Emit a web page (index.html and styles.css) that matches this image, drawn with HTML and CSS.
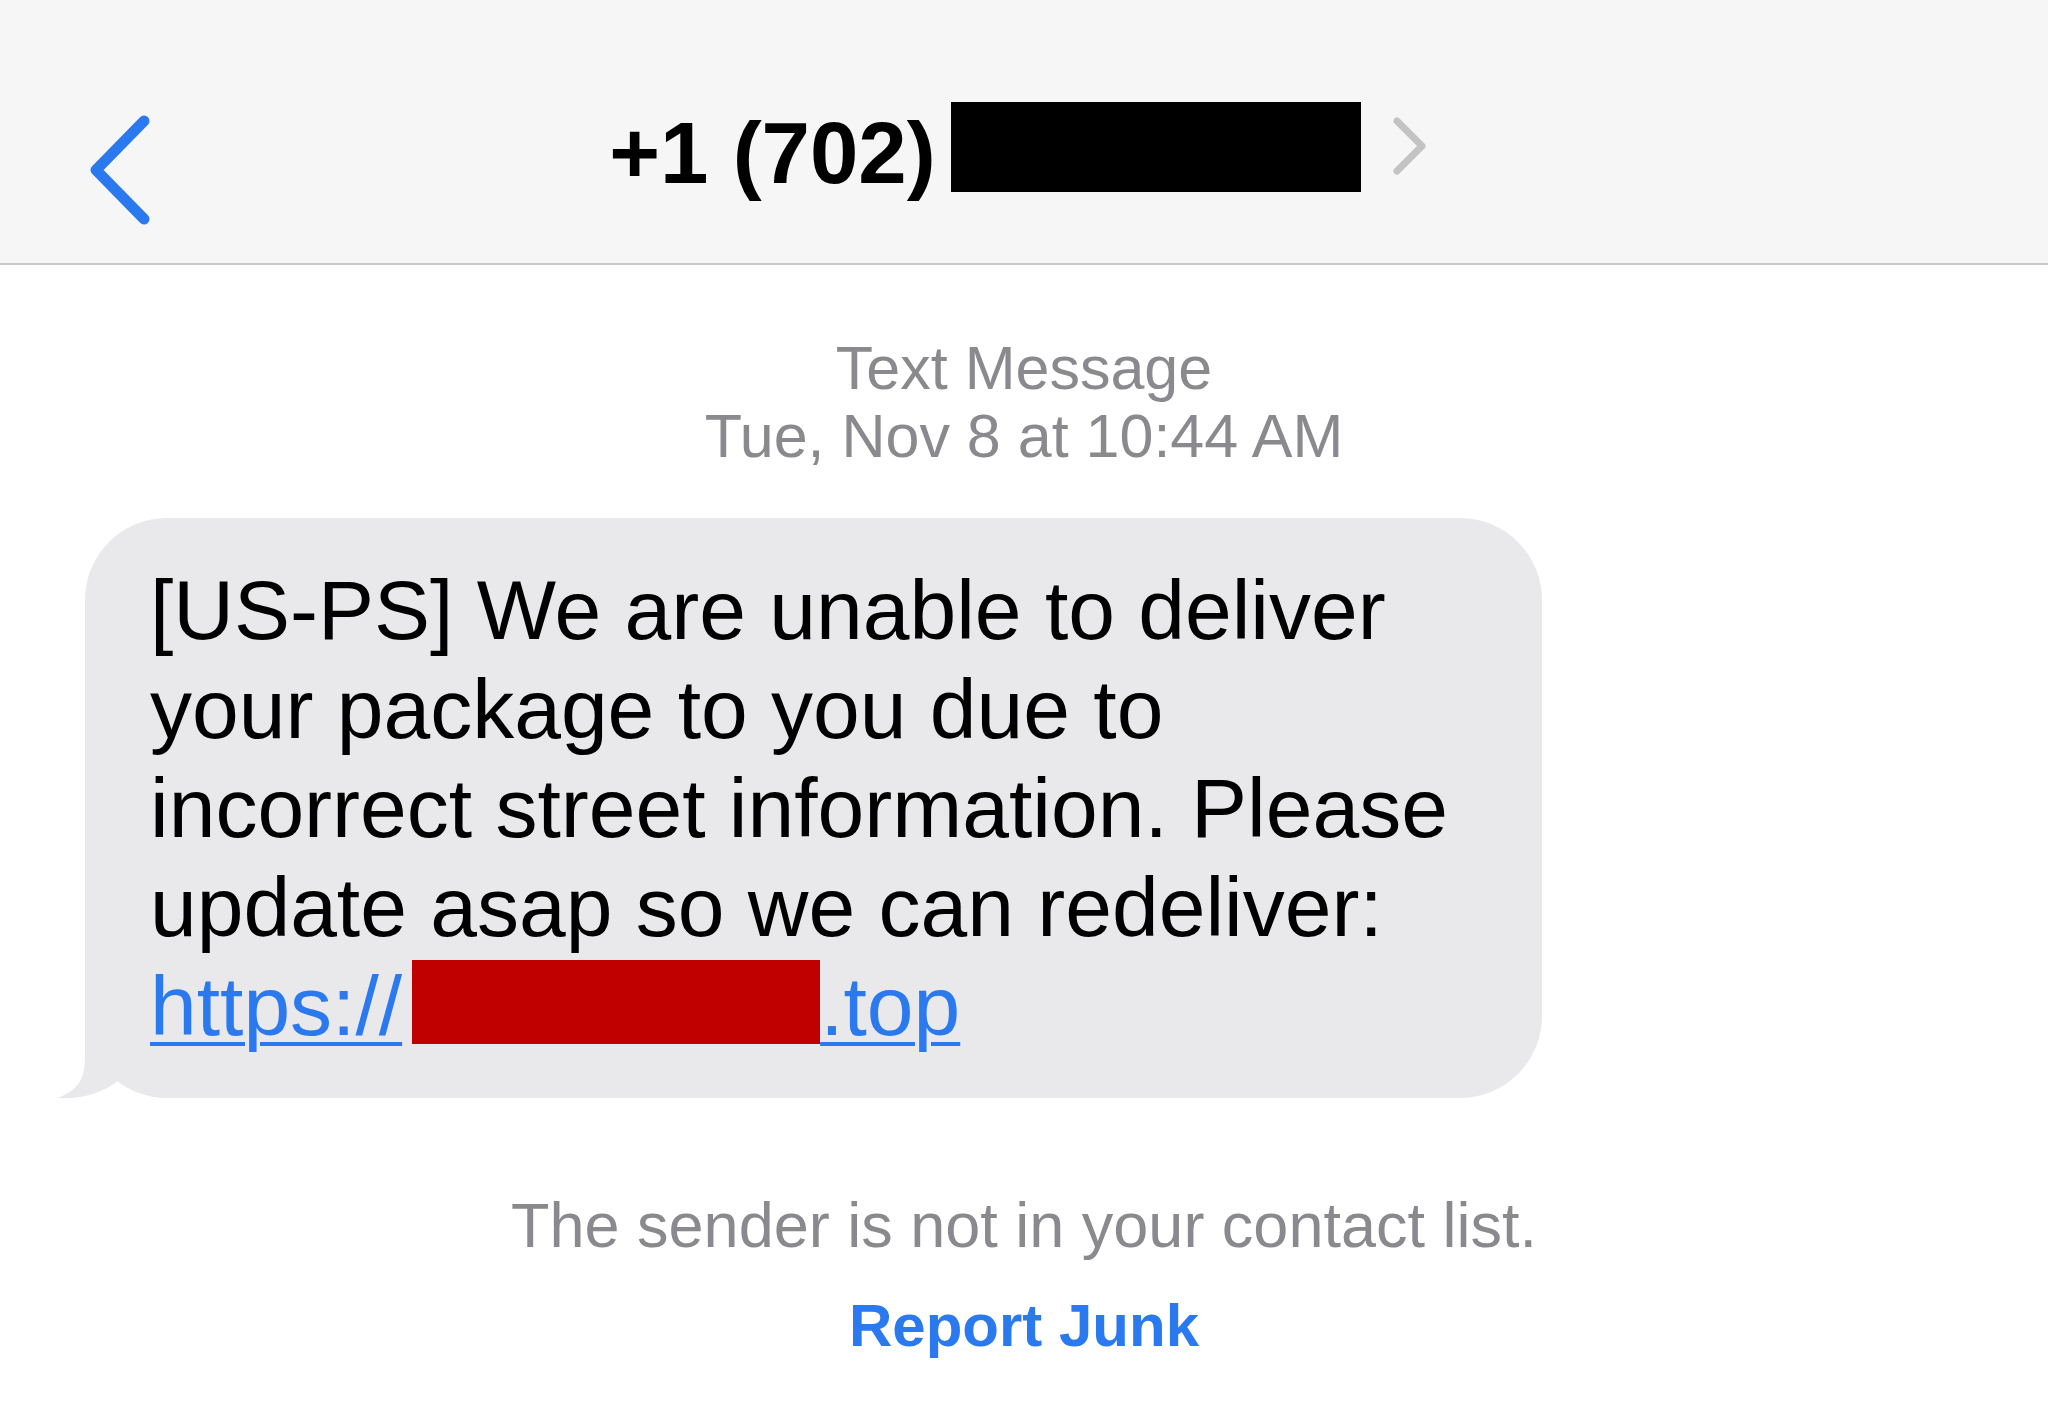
FILE: index.html
```html
<!DOCTYPE html>
<html lang="en">
<head>
    <meta charset="UTF-8">
    <meta name="viewport" content="width=device-width, initial-scale=1.0">
    <title>Text Message</title>
    <link rel="stylesheet" href="styles.css">
</head>
<body>
    <header class="nav-bar">
        <a class="back-button" href="#" aria-label="Back">
            <svg class="back-icon" viewBox="0 0 70 115" width="70" height="115">
                <path d="M60 8 L12 57 L60 106" />
            </svg>
        </a>
        <h1 class="contact-title">
            +1 (702)<span class="redact-black"></span><svg class="detail-icon" viewBox="0 0 40 62" width="40" height="62">
                <path d="M8 6 L33 31 L8 56" />
            </svg>
        </h1>
        <div class="nav-spacer"></div>
    </header>

    <main class="thread">
        <div class="timestamp">
            <div class="timestamp-kind">Text Message</div>
            <div class="timestamp-date">Tue, Nov 8 at 10:44 AM</div>
        </div>

        <div class="bubble-row">
            <div class="bubble">
                <p class="bubble-text">[US-PS] We are unable to deliver<br>your package to you due to<br>incorrect street information. Please<br>update asap so we can redeliver:<br><a class="bubble-link" href="#">https://<span class="redact-red"></span>.top</a></p>
                <svg class="bubble-tail" viewBox="0 0 100 100" width="100" height="100">
                    <path d="M30 0 L30 60 C30 82 22 93 2 100 C26 102 48 95 64 82 L78 0 Z" />
                </svg>
            </div>
        </div>

        <div class="junk-notice">
            <p class="junk-text">The sender is not in your contact list.</p>
            <a class="junk-link" href="#">Report Junk</a>
        </div>
    </main>
</body>
</html>
```

FILE: styles.css
```css
* {
    margin: 0;
    padding: 0;
    box-sizing: border-box;
}

:root {
    --ios-blue: #2b79ee;
    --ios-gray: #8a8a8e;
    --bubble-gray: #e9e9eb;
}

body {
    background-color: #fff;
    color: #000;
    font-family: "Liberation Sans", Arial, sans-serif;
    min-height: 100vh;
    overflow: hidden;
}

/* top navigation */
.nav-bar {
    display: grid;
    grid-template-columns: 1fr auto 1fr;
    align-items: start;
    height: 265px;
    background-color: #f6f6f6;
    border-bottom: 2px solid #c9c9c9;
}

.back-button {
    display: block;
    width: 70px;
    margin-top: 113px;
    margin-left: 84px;
}

.back-icon {
    display: block;
}

.back-icon path {
    fill: none;
    stroke: var(--ios-blue);
    stroke-width: 11;
    stroke-linecap: round;
    stroke-linejoin: round;
}

.contact-title {
    margin-top: 102px;
    margin-right: 10px;
    font-size: 87px;
    line-height: 88px;
    font-weight: bold;
    white-space: nowrap;
}

.redact-black {
    display: inline-block;
    width: 410px;
    height: 90px;
    margin-left: 15px;
    background: #000;
    vertical-align: -9px;
}

.detail-icon {
    margin-left: 28px;
    vertical-align: 6px;
}

.detail-icon path {
    fill: none;
    stroke: #c3c3c3;
    stroke-width: 7;
    stroke-linecap: round;
    stroke-linejoin: round;
}

/* message thread */
.thread {
    display: flex;
    flex-direction: column;
}

.timestamp {
    margin-top: 69px;
    text-align: center;
    color: var(--ios-gray);
    font-size: 61px;
    line-height: 68px;
}

.bubble-row {
    display: flex;
    margin-top: 48px;
    padding-left: 85px;
}

.bubble {
    position: relative;
    width: 1457px;
    padding: 43px 40px 42px 65px;
    background: var(--bubble-gray);
    border-radius: 82px;
}

.bubble-text {
    position: relative;
    z-index: 1;
    font-size: 84px;
    line-height: 99px;
    color: #000;
    white-space: nowrap;
}

.bubble-link {
    color: var(--ios-blue);
    text-decoration: underline;
    text-decoration-thickness: 4px;
    text-underline-offset: 7px;
}

.redact-red {
    display: inline-block;
    width: 408px;
    height: 84px;
    margin-left: 10px;
    background: #c00000;
    vertical-align: -9px;
}

.bubble-tail {
    position: absolute;
    left: -30px;
    bottom: 0;
    overflow: visible;
}

.bubble-tail path {
    fill: var(--bubble-gray);
}

/* unknown sender footer */
.junk-notice {
    display: flex;
    flex-direction: column;
    align-items: center;
    margin-top: 92px;
}

.junk-text {
    color: var(--ios-gray);
    font-size: 63px;
    line-height: 70px;
}

.junk-link {
    margin-top: 31px;
    color: var(--ios-blue);
    font-size: 60px;
    line-height: 70px;
    font-weight: bold;
    text-decoration: none;
}
```
